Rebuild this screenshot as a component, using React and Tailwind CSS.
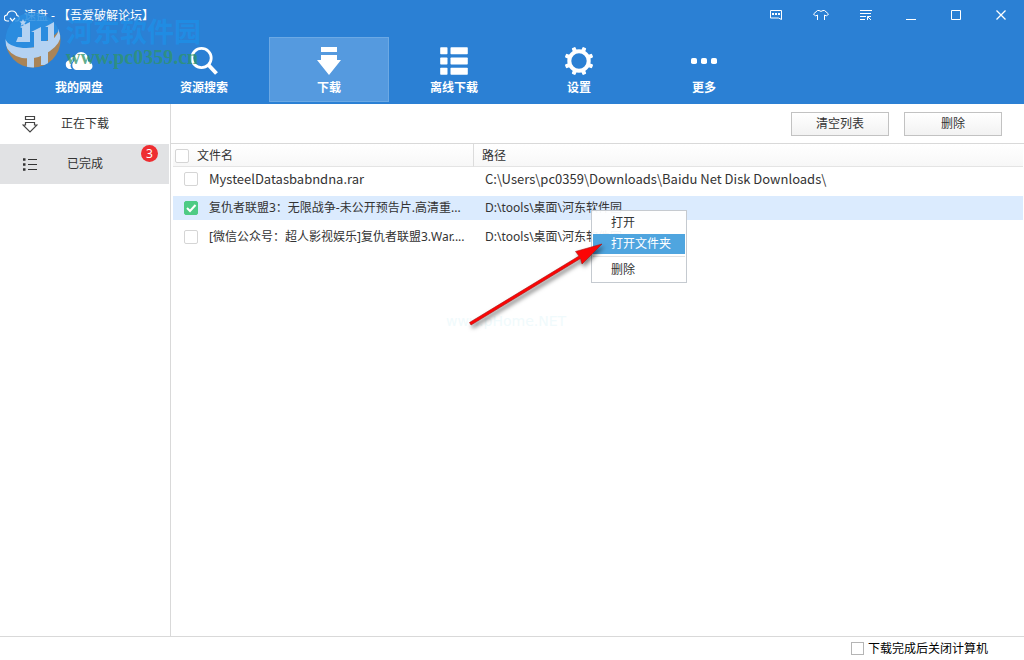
import React, { useState } from 'react';

const UI = "font-['Noto_Sans','Noto_Sans_CJK_SC',sans-serif]";
const LATIN_ROW = "font-['Noto_Sans_CJK_SC',sans-serif]";

function CloudIcon() {
  return (
    <svg width="29" height="20" viewBox="0 0 29 20" fill="#fff">
      <path d="M7 18H5a4.500 4.500 0 0 1-1-8.800 5 5 0 0 1 5-3.200 7 7 0 0 0-1 4 6 6 0 0 0-2.500 4.500A5 5 0 0 0 7 18z" />
      <path d="M11 19a5 5 0 0 1-1.500-9A7 7 0 0 1 16 1a7 7 0 0 1 7 7v2.500A4.500 4.500 0 0 1 25 19z" />
    </svg>
  );
}

function SearchIcon() {
  return (
    <svg width="28" height="30" viewBox="0 0 28 30" fill="none" stroke="#fff">
      <circle cx="11.500" cy="12" r="9.700" strokeWidth="2.800" />
      <path d="M18.500 19l8 8.500" strokeWidth="4" />
    </svg>
  );
}

function DownloadIcon() {
  return (
    <svg width="24" height="28" viewBox="0 0 24 28" fill="#fff">
      <path d="M4 0h16v5H4zM4 8h16v5h4L12 28 0 13h4z" />
    </svg>
  );
}

function ListIcon() {
  return (
    <svg width="28" height="28" viewBox="0 0 28 28" fill="#fff">
      {[0, 10.3, 20.6].map((y) => (
        <g key={y}>
          <rect x="0.200" y={y + 0.2} width="7.300" height="7" rx=".8" />
          <rect x="10.500" y={y + 0.2} width="17.300" height="7" rx=".8" />
        </g>
      ))}
    </svg>
  );
}

function GearIcon() {
  return (
    <svg width="30" height="30" viewBox="-15 -15 30 30">
      <circle r="9.700" fill="none" stroke="#fff" strokeWidth="4" />
      {[22.5, 67.5, 112.5, 157.5, 202.5, 247.5, 292.5, 337.5].map((a) => (
        <rect key={a} x="-2" y="-14.600" width="4" height="5" rx="1" fill="#fff" transform={`rotate(${a})`} />
      ))}
    </svg>
  );
}

function MoreIcon() {
  return (
    <svg width="26" height="6" viewBox="0 0 26 6" fill="#fff">
      <rect width="6" height="6" rx="1.800" />
      <rect x="10" width="6" height="6" rx="1.800" />
      <rect x="20" width="6" height="6" rx="1.800" />
    </svg>
  );
}

const NAV = [
  ['我的网盘', CloudIcon],
  ['资源搜索', SearchIcon],
  ['下载', DownloadIcon],
  ['离线下载', ListIcon],
  ['设置', GearIcon],
  ['更多', MoreIcon],
];

const WINDOW_ICONS = [
  { label: '反馈', width: 12, size: 'w-[75px]', art: <><path d="M.5 1.500h11v9l-3-1.500h-8z" /><path d="M2 5h2M5 5h2M8 5h2" strokeWidth="2" /></> },
  { label: '换肤', width: 16, size: 'w-[15px]', art: <path d="M4.500 11v-5l-2 1-2-2 4-3.500h1.500q2 1.800 4 0h1.500l4 3.500-2 2-2-1v5" /> },
  { label: '菜单', width: 12, size: 'w-[75px]', art: <path d="M0 1.500h12M0 4.500h11M0 7.500h6M0 10.500h5M7.500 11V7.500H11M7.500 7.500l3.500 3.500" /> },
  { label: '最小化', width: 10, size: 'w-[15px]', art: <path d="M0 10.500h10" /> },
  { label: '最大化', width: 10, size: 'w-[75px]', art: <path d="M.5 1.500h9v9h-9z" /> },
  { label: '关闭', width: 10, size: 'w-[15px]', art: <path d="M.5 1.500l9 9M9.500 1.500l-9 9" strokeWidth="1.300" /> },
];

const FILES = [
  { name: 'MysteelDatasbabndna.rar', path: 'C:\\Users\\pc0359\\Downloads\\Baidu Net Disk Downloads\\', font: `text-[13px] ${LATIN_ROW}` },
  { name: '复仇者联盟3：无限战争-未公开预告片.高清重...', path: 'D:\\tools\\桌面\\河东软件园', font: 'text-[12px]' },
  { name: '[微信公众号：超人影视娱乐]复仇者联盟3.War....', path: 'D:\\tools\\桌面\\河东软件园', font: 'text-[12px]' },
];

function Check({ label, checked, onChange }) {
  return (
    <span className="relative flex size-[14px] shrink-0">
      <input
        type="checkbox"
        aria-label={label}
        checked={checked}
        onChange={onChange}
        className="size-[14px] appearance-none rounded-[2px] border border-[#d5d5d5] bg-white checked:border-[#4ecb84] checked:bg-[#4ecb84]"
      />
      {checked && (
        <svg className="pointer-events-none absolute inset-0" width="14" height="14" viewBox="0 0 14 14" fill="none" stroke="#fff" strokeWidth="2">
          <path d="M3 7l3 3 5.500-6" />
        </svg>
      )}
    </span>
  );
}

function Watermark() {
  return (
    <div className="pointer-events-none absolute top-[12px] left-[5px] flex">
      <svg width="57" height="56" viewBox="0 0 57 56">
        <defs>
          <clipPath id="disc"><circle cx="28" cy="28" r="27.500" /></clipPath>
        </defs>
        <g clipPath="url(#disc)">
          <path d="M0 0h57v26Q30 44 0 32z" fill="#2a8ee0" opacity=".85" />
          <path d="M0 33Q28 46 57 16v40H0z" fill="#a98457" />
          <path d="M0 27q4 8 18 9 18 1 30-9 7-6 5-13 8 14-8 25-12 9-28 7Q4 43 0 32z" fill="#b4d2f2" />
          <path d="M22 38h7v18h-7zM36 36h7v17h-7z" fill="#b4d2f2" />
        </g>
        <path d="M11 30l2-5h4v-9l-2-1 10-5v20z" fill="#b4d2f2" />
        <path d="M29 37V20h-3l10-5v14h7V15h-3l9-5v25q-9 3-13 2z" fill="#b4d2f2" />
        <path d="M18 7l1 2.300 2.500.2-1.900 1.700.6 2.500L18 12.400l-2.200 1.300.6-2.500-1.900-1.700 2.500-.2z" fill="#b4d2f2" />
      </svg>
      <div className="flex flex-col pt-[4px] pl-[4px]">
        <span className="text-[27px] leading-[30px] font-bold whitespace-nowrap text-[#1f8fe6]/85 font-['Noto_Sans_CJK_SC',sans-serif]">河东软件园</span>
        <span className="text-[20px] leading-[22px] font-bold whitespace-nowrap text-[#2f9468]/75 font-['Liberation_Serif','Noto_Sans_CJK_SC',serif]">www.pc0359.cn</span>
      </div>
    </div>
  );
}

export default function App() {
  const [selected, setSelected] = useState([false, true, false]);
  const toggle = (i) => setSelected(selected.map((v, n) => (n === i ? !v : v)));
  const all = selected.every(Boolean);

  return (
    <div className={`relative flex min-h-screen flex-col bg-white text-[12px] text-[#333] ${UI}`}>
      <header className="relative bg-[#2b80d4] pb-[2px] text-white">
        <div className="flex h-[37px] items-start justify-between pr-[16px] pl-[4px]">
          <div className="flex h-[32px] items-center gap-[4px]">
            <svg width="16" height="14" viewBox="0 0 16 14" fill="none" stroke="#fff" strokeWidth="1.200">
              <path d="M5 12H3.500a3 3 0 0 1-.5-6Q4 2 8 2t5 4.500a2.800 2.800 0 0 1 0 5.500h-2M6 9l2.500 3L11 9" />
            </svg>
            <h1 className="text-[12px]">速盘 - 【吾爱破解论坛】</h1>
          </div>
          <div className="flex h-[30px] items-center">
            {WINDOW_ICONS.map(({ label, width, size, art }) => (
              <button key={label} aria-label={label} className={`flex h-[30px] items-center justify-center ${size}`}>
                <svg className="shrink-0" width={width} height="12" viewBox={`0 0 ${width} 12`} fill="none" stroke="#fff">{art}</svg>
              </button>
            ))}
          </div>
        </div>
        <nav className="flex gap-[5px] pl-[19px]">
          {NAV.map(([label, Icon]) => (
            <button
              key={label}
              className={`flex h-[65px] w-[120px] flex-col items-center border pt-[6px] font-bold ${label === '下载' ? 'border-[#6ca9e4] bg-[#559adf]' : 'border-transparent'}`}
            >
              <span className="flex h-[34px] items-center justify-center"><Icon /></span>
              <span className="leading-[20px]">{label}</span>
            </button>
          ))}
        </nav>
        <Watermark />
      </header>

      <div className="flex grow">
        <aside className="flex w-[171px] shrink-0 flex-col border-r border-[#d9d9d9]">
          <button className="flex h-[40px] items-center pl-[22px]">
            <svg width="16" height="18" viewBox="0 0 16 18" fill="none" stroke="#444" strokeWidth="1.200">
              <path d="M3.500 1.500h9v3h-9zM3.500 7.500h9v2.500h2.500l-7 7-7-7h2.500z" />
            </svg>
            <span className="ml-[23px]">正在下载</span>
          </button>
          <button className="mr-px flex h-[40px] items-center bg-[#e1e2e4] pl-[22px]">
            <svg width="16" height="14" viewBox="0 0 16 14" stroke="#333" fill="#333">
              <path d="M6 2.500h9M6 7.500h9M6 12.500h9" />
              <path d="M1 2.500h2.500M1 7.500h2.500M1 12.500h2.500" strokeWidth="2.400" />
            </svg>
            <span className="ml-[29px]">已完成</span>
            <span className="mb-[21px] ml-[38px] flex size-[17px] items-center justify-center rounded-full bg-[#ee2d31] text-white">3</span>
          </button>
        </aside>

        <main className="relative min-w-0 grow">
          <div className="flex h-[40px] items-center justify-end gap-[15px] border-b border-[#d9d9d9] pr-[22px]">
            {['清空列表', '删除'].map((t) => (
              <button key={t} className="h-[24px] w-[98px] border border-[#c2c2c2] bg-linear-to-b from-white to-[#f2f2f2] pt-px">{t}</button>
            ))}
          </div>
          <div className="pr-px pl-[2px]">
            <table className="w-full table-fixed border-separate border-spacing-0 text-left">
              <thead>
                <tr className="h-[23px] bg-linear-to-b from-white to-[#f7f7f7]">
                  <th className="w-[301px] border-r border-b border-r-[#dcdcdc] border-b-[#e4e4e4] p-0 pt-[2px] font-normal">
                    <div className="flex items-center gap-[8px] pl-[2px]">
                      <Check label="全选" checked={all} onChange={() => setSelected(selected.map(() => !all))} />
                      文件名
                    </div>
                  </th>
                  <th className="border-b border-[#e4e4e4] p-0 pt-[2px] pl-[8px] font-normal">路径</th>
                </tr>
              </thead>
              <tbody>
                {FILES.map((f, i) => (
                  <tr key={f.name}>
                    <td className="p-0 pb-[5px]">
                      <div className={`flex h-[24px] items-center gap-[11px] pl-[11px] whitespace-nowrap ${selected[i] ? 'bg-[#dbebfe]' : ''}`}>
                        <Check label={f.name} checked={selected[i]} onChange={() => toggle(i)} />
                        <span className={f.font}>{f.name}</span>
                      </div>
                    </td>
                    <td className="p-0 pb-[5px]">
                      <div className={`flex h-[24px] items-center pl-[11px] whitespace-nowrap ${selected[i] ? 'bg-[#dbebfe]' : ''}`}>
                        <span className={f.font}>{f.path}</span>
                      </div>
                    </td>
                  </tr>
                ))}
              </tbody>
            </table>
          </div>

          <div role="menu" className="absolute top-[106px] left-[420px] flex w-[96px] flex-col border border-[#c5cad0] bg-white/95 p-px">
            <button role="menuitem" className="h-[22px] pl-[18px] text-left">打开</button>
            <button role="menuitem" className="h-[20px] bg-[#4fa5df] pl-[18px] text-left text-white">打开文件夹</button>
            <hr className="mt-[2px] border-[#e2e2e2]" />
            <button role="menuitem" className="h-[24px] pt-px pl-[18px] text-left">删除</button>
          </div>

          <span className="pointer-events-none absolute top-[207px] left-[275px] text-[14px] text-[#f0fafc] font-['DejaVu_Sans',sans-serif]">www.pHome.NET</span>
          <svg className="pointer-events-none absolute top-[130px] left-[290px] drop-shadow-[2px_3px_2px_rgba(0,0,0,0.5)]" width="150" height="100" viewBox="0 0 150 100">
            <path d="M8.500 88.500L118 22l-3.500-4.500L141 10l-20 20-1.500-5.500L10 91z" fill="#fb0505" stroke="#a81414" strokeWidth=".6" />
          </svg>
        </main>
      </div>

      <footer className="flex h-[24px] items-center justify-end border-t border-[#d9d9d9] pr-[36px] text-black">
        <label className="flex items-center gap-[4px]">
          <input type="checkbox" className="size-[13px] appearance-none border border-[#b5b5b5] bg-white checked:bg-[#4ecb84]" />
          下载完成后关闭计算机
        </label>
      </footer>
    </div>
  );
}
